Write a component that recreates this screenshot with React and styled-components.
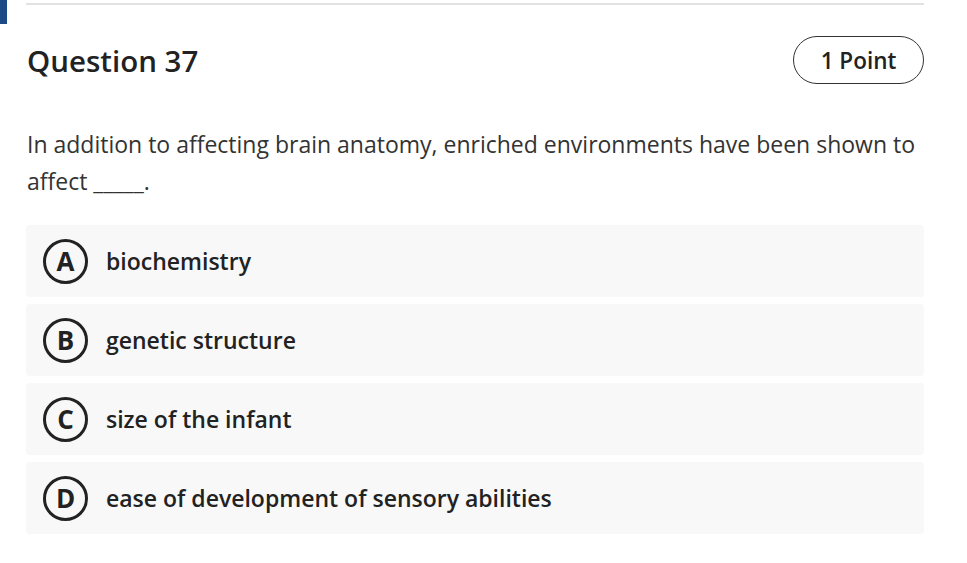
import React from 'react';
import styled, { createGlobalStyle } from 'styled-components';

const GlobalStyle = createGlobalStyle`
  html, body {
    margin: 0;
    padding: 0;
    background: #fff;
    font-family: 'Open Sans', 'Liberation Sans', sans-serif;
  }
`;

const Page = styled.div`
  display: flex;
  align-items: flex-start;
`;

const SideMark = styled.div`
  width: 7px;
  height: 24px;
  flex: none;
  background: #1b4a86;
`;

const Content = styled.main`
  width: 898px;
  margin-left: 19px;
  padding-top: 3px;
`;

const Divider = styled.hr`
  margin: 0;
  border: none;
  height: 2px;
  background: #e2e2e2;
`;

const Header = styled.header`
  display: flex;
  justify-content: space-between;
  align-items: center;
  margin-top: 31px;
  height: 48px;
`;

const Title = styled.h2`
  margin: 0 0 0 1px;
  font-size: 29.5px;
  font-weight: 600;
  color: #222;
`;

const PointBadge = styled.span`
  display: inline-flex;
  align-items: center;
  justify-content: center;
  box-sizing: border-box;
  width: 131px;
  height: 48px;
  border: 1px solid #333;
  border-radius: 24px;
  font-size: 22.5px;
  font-weight: 600;
  color: #222;
`;

const Prompt = styled.p`
  margin: 42px 0 0 1px;
  font-size: 23px;
  line-height: 37px;
  color: #333;
`;

const Options = styled.div`
  display: flex;
  flex-direction: column;
  gap: 7px;
  margin-top: 25px;
`;

const Option = styled.div`
  display: flex;
  align-items: center;
  gap: 18px;
  height: 72px;
  padding-left: 17px;
  background: #f8f8f8;
  border-radius: 4px;
  cursor: pointer;
`;

const Letter = styled.span`
  display: flex;
  align-items: center;
  justify-content: center;
  box-sizing: border-box;
  width: 45px;
  height: 45px;
  flex: none;
  border: 3px solid #222;
  border-radius: 50%;
  font-size: 26px;
  font-weight: 700;
  line-height: 1;
  color: #222;
`;

const OptionText = styled.span`
  font-size: 23px;
  font-weight: 600;
  color: #222;
`;

const choices = [
  ['A', 'biochemistry'],
  ['B', 'genetic structure'],
  ['C', 'size of the infant'],
  ['D', 'ease of development of sensory abilities'],
];

export default function App() {
  return (
    <Page>
      <GlobalStyle />
      <SideMark />
      <Content>
        <Divider />
        <Header>
          <Title>Question 37</Title>
          <PointBadge>1 Point</PointBadge>
        </Header>
        <Prompt>
          In addition to affecting brain anatomy, enriched environments have been shown to
          affect _____.
        </Prompt>
        <Options>
          {choices.map(([key, text]) => (
            <Option key={key}>
              <Letter>{key}</Letter>
              <OptionText>{text}</OptionText>
            </Option>
          ))}
        </Options>
      </Content>
    </Page>
  );
}
